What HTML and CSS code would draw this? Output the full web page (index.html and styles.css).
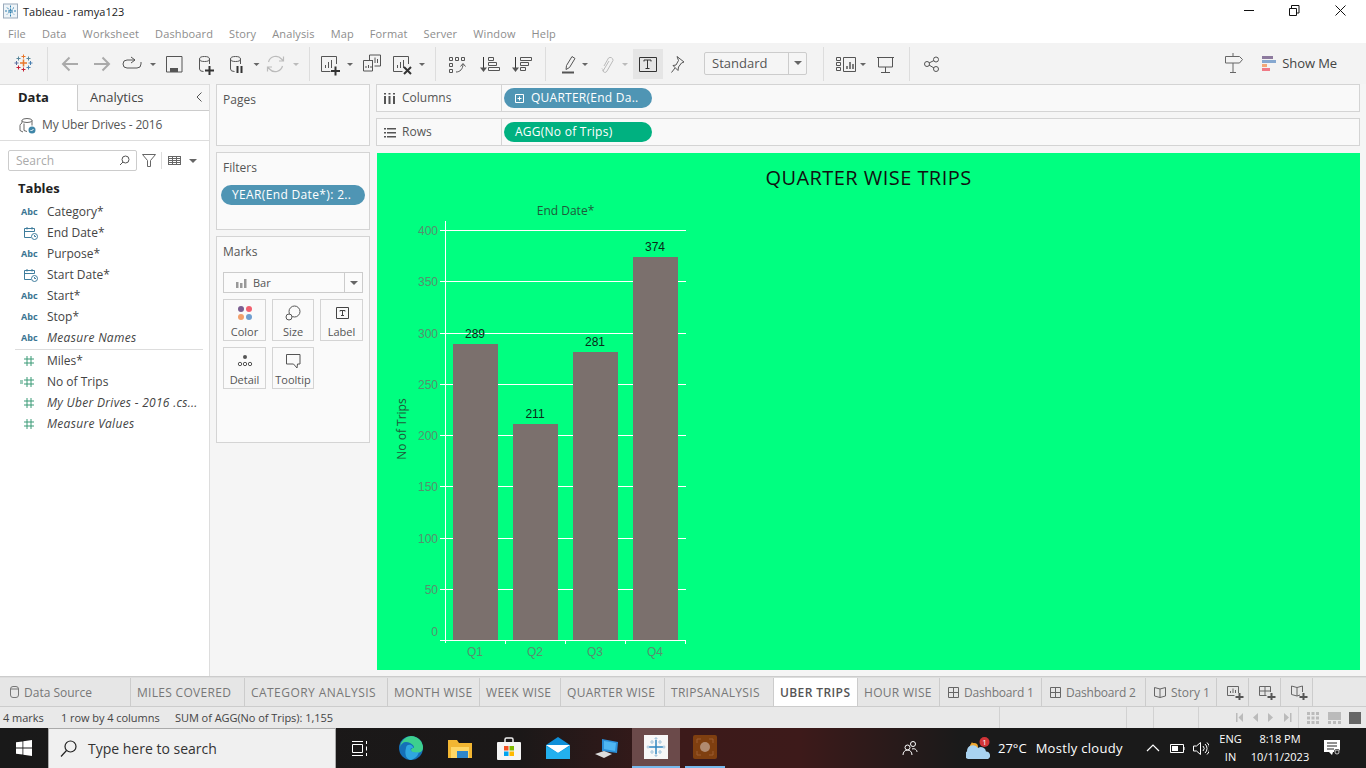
FILE: index.html
```html
<!DOCTYPE html>
<html lang="en">
<head>
  <meta charset="UTF-8">
  <title>Tableau - ramya123</title>
  <link rel="stylesheet" href="styles.css">
</head>
<body>
  <div class="titlebar">
    <svg class="app-icon" width="15" height="16" viewBox="0 0 15 16">
      <rect x="0.5" y="1" width="14" height="14" fill="#eef4f8" stroke="#9ab"/>
      <path d="M7.5 2.5v11M2 8h11M4 4.500l7 7M11 4.500l-7 7" stroke="#2f7fae" stroke-width="1" stroke-dasharray="2 1"/>
    </svg>
    <span class="title-text">Tableau - ramya123</span>
    <div class="win-btns">
      <svg width="122" height="22" viewBox="1245 0 122 22" fill="none" stroke="#111">
        <path d="M1245 10.500h10"/>
        <path d="M1290.500 8.500h7v7h-7zM1292.500 8v-2.500h7.500v7.500h-2.500"/>
        <path d="M1336.500 5.500l10 10M1346.500 5.500l-10 10"/>
      </svg>
    </div>
  </div>

  <div class="menubar">
    <span>File</span><span>Data</span><span>Worksheet</span><span>Dashboard</span><span>Story</span><span>Analysis</span><span>Map</span><span>Format</span><span>Server</span><span>Window</span><span>Help</span>
  </div>

  <div class="toolbar">
    <svg class="strip" width="704" height="41" viewBox="0 43 704 41" fill="none" stroke="#555">
      <!-- logo -->
      <path d="M20 63h7M23.500 59.500v7" stroke="#e8762b" stroke-width="1.500"/>
      <path d="M21.500 56.500h4M23.500 54.500v4" stroke="#e8762b"/>
      <path d="M14.500 63h4M16.500 61v4" stroke="#5b6f9e"/>
      <path d="M28.500 63h4M30.500 61v4M26.500 67.500h4M28.500 65.500v4" stroke="#4a7fb0"/>
      <path d="M21.500 69.500h4M23.500 67.500v4M16.500 67.500h4M18.500 65.500v4" stroke="#c72035"/>
      <path d="M16.500 58.500h4M18.500 56.500v4M26.500 58.500h4M28.500 56.500v4" stroke="#59879b"/>
      <path d="M47.500 47v34M309.500 47v34M435.500 47v34M545.500 47v34" stroke="#ddd"/>
      <!-- back, forward, cycle -->
      <path d="M78 64H63M69.500 57.500L63 64l6.500 6.500" stroke="#aaa" stroke-width="2"/>
      <path d="M94 64h15M102.500 57.500L109 64l-6.500 6.500" stroke="#aaa" stroke-width="2"/>
      <path d="M135 60h-8a4 4 0 0 0 0 8h10a4 4 0 0 0 4-4v-2M131 57l4 3-4 3"/>
      <path class="caret" d="M150 63h6l-3 3z"/>
      <!-- save -->
      <path d="M166.500 56.500h15.500v15.500h-15.500z"/>
      <path class="solid" d="M170 72v-4h8v4z"/>
      <!-- data sources -->
      <path d="M199.500 59v10q0 2.500 4 2.500M209.500 59v5"/>
      <ellipse cx="204.500" cy="59" rx="5" ry="2.500"/>
      <path d="M205 70.500h9M209.500 66v9" stroke="#333" stroke-width="2"/>
      <path d="M230.500 59v10q0 2.500 4 2.500M240.500 59v5"/>
      <ellipse cx="235.500" cy="59" rx="5" ry="2.500"/>
      <path d="M237.500 66v7M241.500 66v7" stroke="#333" stroke-width="2"/>
      <path class="caret" d="M253.500 63h6l-3 3z"/>
      <!-- refresh -->
      <path d="M268.500 62a7.500 7.500 0 0 1 13-3l2 2M282.500 66a7.500 7.500 0 0 1-13 3l-2-2M283.500 56.500v4.500h-4.500M267.500 71.500v-4.500h4.500" stroke="#bbb" stroke-width="1.200"/>
      <path class="caret-off" d="M293 63h6l-3 3z"/>
      <!-- worksheet tools -->
      <path d="M336.500 64v-7.500h-15v15h9M325.500 68v-3M328.500 68v-6M331.500 68v-8"/>
      <path d="M331 71h9M335.500 66.500v9" stroke="#333" stroke-width="2"/>
      <path class="caret" d="M347 63h6l-3 3z"/>
      <path d="M369.500 60v-5h11v11h-6M372.500 63v-3M375 63v-5.500M377.500 63v-4"/>
      <path d="M363.500 60.500h9v10.500h-9zM366 68v-2M368.500 68v-3M371 68v-2"/>
      <path d="M408.500 64v-7.500h-15v15h9M397.500 68v-3M400.500 68v-6M403.500 68v-8"/>
      <path d="M404 67l7 7M411 67l-7 7" stroke="#333" stroke-width="2"/>
      <path class="caret" d="M419 63h6l-3 3z"/>
      <!-- swap, sort -->
      <path d="M449.500 57.500h3v3h-3zM455.500 57.500h3v3h-3zM461.500 57.500h3v3h-3zM449.500 63.500h3v3h-3zM449.500 69.500h3v3h-3z"/>
      <path d="M456 72c4 0 7-3 7-8M460.500 66.500l2.500-3 2.500 3"/>
      <path d="M483.500 57v14" stroke="#333"/>
      <path class="solid" d="M480 67.500h7l-3.500 4.500z"/>
      <path d="M488.500 57.500h5v3h-5zM488.500 62.500h8v3h-8zM488.500 67.500h11v3h-11z"/>
      <path d="M515.500 57v14" stroke="#333"/>
      <path class="solid" d="M512 67.500h7l-3.500 4.500z"/>
      <path d="M520.500 57.500h11v3h-11zM520.500 62.500h8v3h-8zM520.500 67.500h5v3h-5z"/>
      <!-- highlight, annotate -->
      <path d="M562 72.500h12" stroke-width="2"/>
      <path d="M566 69.500l.5-4 5.500-9 3 2-5.500 9z"/>
      <path class="caret" d="M582 63h6l-3 3z"/>
      <path d="M604 66l4.500-8a2.800 2.800 0 0 1 4.500 2.500l-6 10.500a2 2 0 0 1-4-1.500l-1-1M603 71l6-10" stroke="#bbb"/>
      <path class="caret-off" d="M622 63h6l-3 3z"/>
      <rect class="active-tool" x="633" y="49" width="30" height="30"/>
      <path d="M639.500 57.500h17v14h-17z" stroke="#333"/>
      <path d="M644 61.500v-1.500h7v1.500M647.500 60v8M645.500 68.500h4" stroke="#333"/>
      <path d="M677 56.500l7 5.500-2.500 1-3 4-.5 3.500-5-5 3-.5 2.500-4.500zM675 68l-3.500 4.500"/>
    </svg>

    <div class="fit-select"><span>Standard</span><i class="sel-arrow"></i></div>

    <svg class="strip" width="143" height="41" viewBox="807 43 143 41" fill="none" stroke="#555">
      <path d="M823.500 47v34M909.500 47v34" stroke="#ddd"/>
      <path d="M836.500 57.500h4v3h-4zM836.500 62.500h4v3h-4zM836.500 67.500h4v3h-4zM843.500 57.500h12v14h-12z"/>
      <path d="M847 69v-3M850 69v-7M853 69v-5" stroke-width="1.500"/>
      <path class="caret" d="M860 63h6l-3 3z"/>
      <path d="M877 57.500h17M878.500 57.500v9.500h14v-9.500M885.500 67v5.500M881 72.500h9"/>
      <circle cx="936" cy="59.500" r="2.500"/>
      <circle cx="936" cy="69" r="2.500"/>
      <circle cx="927" cy="64" r="2.500"/>
      <path d="M929 63l5-2.500M929 65l5 3"/>
    </svg>

    <div class="show-me">
      <svg width="18" height="24" viewBox="1226 52 18 24" fill="none" stroke="#666">
        <path d="M1226.500 56.500h14l3 3-3 3.500h-14zM1234 56v-3M1234 63v9M1231 72.500h6"/>
      </svg>
      <svg class="bars-icon" width="14" height="16" viewBox="0 0 14 16">
        <rect width="11" height="3" fill="#8d7a9e"/>
        <rect y="4" width="14" height="3" fill="#86a8d0"/>
        <rect y="8" width="5" height="3" fill="#f2a878"/>
        <rect y="12" width="8" height="3" fill="#f07a86"/>
      </svg>
      <span>Show Me</span>
    </div>
  </div>

  <div class="workspace">
    <div class="data-pane">
      <div class="pane-tabs">
        <div class="pane-tab selected">Data</div>
        <div class="pane-tab">Analytics
          <svg class="collapse" width="8" height="10" viewBox="0 0 8 10" fill="none" stroke="#555"><path d="M6.500 0.500L2 5l4.500 4.500"/></svg>
        </div>
      </div>
      <div class="source">
        <svg width="17" height="17" viewBox="0 0 17 17" fill="none" stroke="#666">
          <ellipse cx="8" cy="3.500" rx="5" ry="2"/>
          <path d="M3 3.500v2.500q-2 1-2 2.500v5l3 1.500M13 3.500v5M5 6.500v7l3 1"/>
          <circle cx="13" cy="13" r="3.500" fill="#3f86a8" stroke="none"/>
          <path d="M11.500 13l1 1 2-2" stroke="#fff"/>
        </svg>
        <span>My Uber Drives - 2016</span>
      </div>
      <div class="search-row">
        <div class="search-box">
          <span>Search</span>
          <svg width="11" height="11" viewBox="0 0 11 11" fill="none" stroke="#555"><circle cx="6.500" cy="4.500" r="3.500"/><path d="M4 7L1 10"/></svg>
        </div>
        <svg class="funnel" width="14" height="13" viewBox="0 0 14 13" fill="none" stroke="#666"><path d="M0.500 0.500h13L8.500 6.500v6h-3v-6z"/></svg>
        <i class="search-sep"></i>
        <svg width="13" height="9" viewBox="0 0 13 9" fill="none" stroke="#666"><path d="M0 .5h13M0 2.500h13M0 4.500h13M0 6.500h13M0 8.500h13M.5 0v9M4.500 0v9M8.500 0v9M12.500 0v9"/></svg>
        <i class="small-caret"></i>
      </div>
      <div class="tables-head">Tables</div>
      <ul class="fields">
        <li><b class="abc">Abc</b>Category*</li>
        <li><svg class="date-ic" width="14" height="14" viewBox="0 0 14 14" fill="none" stroke="#3f7d9c"><path d="M7 11.500H0.500v-9h10v3M0.500 5.500h10M3 1v2.500M8 1v2.500"/><circle cx="10.500" cy="10.500" r="3"/><path d="M10.500 9v1.500h1.500"/></svg>End Date*</li>
        <li><b class="abc">Abc</b>Purpose*</li>
        <li><svg class="date-ic" width="14" height="14" viewBox="0 0 14 14" fill="none" stroke="#3f7d9c"><path d="M7 11.500H0.500v-9h10v3M0.500 5.500h10M3 1v2.500M8 1v2.500"/><circle cx="10.500" cy="10.500" r="3"/><path d="M10.500 9v1.500h1.500"/></svg>Start Date*</li>
        <li><b class="abc">Abc</b>Start*</li>
        <li><b class="abc">Abc</b>Stop*</li>
        <li class="calc"><b class="abc">Abc</b>Measure Names</li>
        <li class="divider"></li>
        <li><svg class="hash" width="10" height="10" viewBox="0 0 10 10" stroke="#3a9a76" fill="none"><path d="M0 3h10M0 7h10M3 0v10M7 0v10"/></svg>Miles*</li>
        <li><svg class="hash calc-hash" width="14" height="10" viewBox="0 0 14 10" stroke="#3a9a76" fill="none"><path d="M0 4h3M0 6h3M4 3h10M4 7h10M7 0v10M11 0v10"/></svg>No of Trips</li>
        <li class="calc"><svg class="hash" width="10" height="10" viewBox="0 0 10 10" stroke="#3a9a76" fill="none"><path d="M0 3h10M0 7h10M3 0v10M7 0v10"/></svg>My Uber Drives - 2016 .cs...</li>
        <li class="calc"><svg class="hash" width="10" height="10" viewBox="0 0 10 10" stroke="#3a9a76" fill="none"><path d="M0 3h10M0 7h10M3 0v10M7 0v10"/></svg>Measure Values</li>
      </ul>
    </div>

    <div class="cards">
      <div class="card pages-card"><div class="card-title">Pages</div></div>
      <div class="card filters-card">
        <div class="card-title">Filters</div>
        <div class="pill pill-blue filter-pill">YEAR(End Date*): 2..</div>
      </div>
      <div class="card marks-card">
        <div class="card-title">Marks</div>
        <div class="mark-type">
          <svg width="11" height="10" viewBox="0 0 11 10" fill="#999"><rect y="4" width="2.500" height="6"/><rect x="4" y="5" width="2.500" height="5"/><rect x="8" y="1" width="2.500" height="9"/></svg>
          <span>Bar</span>
          <i class="sel-arrow"></i>
        </div>
        <div class="mark-grid">
          <div class="mark-btn">
            <svg width="16" height="16" viewBox="0 0 16 16"><circle cx="4" cy="4" r="3" fill="#7b5e91"/><circle cx="12" cy="4" r="3" fill="#f1606f"/><circle cx="4" cy="12" r="3" fill="#f2a06c"/><circle cx="12" cy="12" r="3" fill="#6f9fd0"/></svg>
            <span>Color</span>
          </div>
          <div class="mark-btn">
            <svg width="16" height="16" viewBox="0 0 16 16" fill="none" stroke="#555"><circle cx="9.500" cy="6.500" r="5.500"/><circle cx="4" cy="12" r="3" fill="#fafafa"/></svg>
            <span>Size</span>
          </div>
          <div class="mark-btn">
            <svg width="16" height="16" viewBox="0 0 16 16" fill="none" stroke="#444"><path d="M2.500 2.500h12v11h-12z"/><path d="M6 6.500V5.500h5v1M8.500 5.500v5M7 10.500h3"/></svg>
            <span>Label</span>
          </div>
          <div class="mark-btn">
            <svg width="16" height="16" viewBox="0 0 16 16" fill="none" stroke="#555"><circle cx="8" cy="4" r="2" fill="#555" stroke="none"/><circle cx="3" cy="11" r="1.700"/><circle cx="8" cy="11" r="1.700"/><circle cx="13" cy="11" r="1.700"/></svg>
            <span>Detail</span>
          </div>
          <div class="mark-btn">
            <svg width="16" height="16" viewBox="0 0 16 16" fill="none" stroke="#555"><path d="M1.500 1.500h13.500v9.500h-2.500l-.5 4-3.500-4h-7z"/></svg>
            <span>Tooltip</span>
          </div>
        </div>
      </div>
    </div>

    <div class="canvas">
      <div class="shelf">
        <div class="shelf-name">
          <svg width="12" height="11" viewBox="0 0 12 11" fill="#555"><rect y="3" width="2" height="8"/><rect x="4.500" y="3" width="2" height="8"/><rect x="9" y="3" width="2" height="8"/><rect width="2" height="1.500"/><rect x="4.500" width="2" height="1.500"/><rect x="9" width="2" height="1.500"/></svg>
          <span>Columns</span>
        </div>
        <div class="pill pill-blue shelf-pill">
          <svg width="9" height="9" viewBox="0 0 9 9" fill="none" stroke="#fff"><path d="M.5.500h8v8h-8zM2.500 4.500h4M4.500 2.500v4"/></svg>
          QUARTER(End Da..
        </div>
      </div>
      <div class="shelf">
        <div class="shelf-name">
          <svg width="12" height="11" viewBox="0 0 12 11" fill="#555"><rect x="3" y="1" width="9" height="1.500"/><rect x="3" y="5" width="9" height="1.500"/><rect x="3" y="9" width="9" height="1.500"/><rect y="1" width="2" height="1.500"/><rect y="5" width="2" height="1.500"/><rect y="9" width="2" height="1.500"/></svg>
          <span>Rows</span>
        </div>
        <div class="pill pill-green shelf-pill">AGG(No of Trips)</div>
      </div>

      <div class="view">
        <h1 class="view-title">QUARTER WISE TRIPS</h1>
        <svg class="chart" width="983" height="477" viewBox="377 193 983 477">
          <text class="axis-head" x="565.500" y="215" text-anchor="middle">End Date*</text>
          <g class="grid-lines">
            <path d="M445.500 221V643M440 230.500H686M440 281.500H686M440 333.500H686M440 384.500H686M440 435.500H686M440 486.500H686M440 538.500H686M440 589.500H686M440 640.500H686"/>
            <path d="M505.500 640V644M565.500 640V644M625.500 640V644M685.500 640V644"/>
          </g>
          <g class="bars">
            <rect x="453" y="344" width="45" height="296"/>
            <rect x="513" y="424" width="45" height="216"/>
            <rect x="573" y="352" width="45" height="288"/>
            <rect x="633" y="257" width="45" height="383"/>
          </g>
          <g class="tick-labels" text-anchor="end">
            <text x="438" y="235">400</text>
            <text x="438" y="286">350</text>
            <text x="438" y="338">300</text>
            <text x="438" y="389">250</text>
            <text x="438" y="440">200</text>
            <text x="438" y="491">150</text>
            <text x="438" y="543">100</text>
            <text x="438" y="594">50</text>
            <text x="438" y="636">0</text>
          </g>
          <g class="tick-labels" text-anchor="middle">
            <text x="475" y="656">Q1</text>
            <text x="535" y="656">Q2</text>
            <text x="595" y="656">Q3</text>
            <text x="655" y="656">Q4</text>
          </g>
          <g class="value-labels" text-anchor="middle">
            <text x="475" y="338">289</text>
            <text x="535" y="418">211</text>
            <text x="595" y="346">281</text>
            <text x="655" y="251">374</text>
          </g>
          <text class="axis-head" transform="translate(406 429) rotate(-90)" text-anchor="middle">No of Trips</text>
        </svg>
      </div>
    </div>
  </div>

  <div class="sheet-tabs">
    <div class="sheet-tab">
      <svg width="9" height="12" viewBox="0 0 9 12" fill="none" stroke="#777"><rect x=".5" y=".5" width="8" height="11" rx="2.500"/><path d="M.5 3h8"/></svg>
      <span class="muted-gap">Data Source</span>
    </div>
    <div class="sheet-tab caps">MILES COVERED</div>
    <div class="sheet-tab caps wide">CATEGORY ANALYSIS</div>
    <div class="sheet-tab caps">MONTH WISE</div>
    <div class="sheet-tab caps">WEEK WISE</div>
    <div class="sheet-tab caps">QUARTER WISE</div>
    <div class="sheet-tab caps">TRIPSANALYSIS</div>
    <div class="sheet-tab caps current">UBER TRIPS</div>
    <div class="sheet-tab caps">HOUR WISE</div>
    <div class="sheet-tab">
      <svg class="dash-ic" width="11" height="11" viewBox="0 0 11 11" fill="none" stroke="#666"><path d="M.5.500h10v10H.5zM.5 5.500h10M5.500.5v10"/></svg>
      <span class="dash-name">Dashboard 1</span>
    </div>
    <div class="sheet-tab">
      <svg class="dash-ic" width="11" height="11" viewBox="0 0 11 11" fill="none" stroke="#666"><path d="M.5.500h10v10H.5zM.5 5.500h10M5.500.5v10"/></svg>
      <span class="dash-name">Dashboard 2</span>
    </div>
    <div class="sheet-tab">
      <svg class="dash-ic" width="12" height="11" viewBox="0 0 12 11" fill="none" stroke="#666"><path d="M6 2L.5.500v8.500L6 10.500l5.500-1.500V.5zM6 2v8.500"/></svg>
      <span>Story 1</span>
    </div>
    <div class="sheet-tab add-tab">
      <svg width="17" height="15" viewBox="0 0 17 15" fill="none" stroke="#666"><path d="M11.500 8V1.500H.5v9h7M3.500 8V6M6 8V3.500M8.500 8V5"/><path d="M8.500 12h8M12.500 8v7" stroke="#555" stroke-width="2"/></svg>
    </div>
    <div class="sheet-tab add-tab">
      <svg width="17" height="15" viewBox="0 0 17 15" fill="none" stroke="#666"><path d="M11.500 7V1.500H.5v9h7M.5 6h11M6 1.500v9"/><path d="M8.500 12h8M12.500 8v7" stroke="#555" stroke-width="2"/></svg>
    </div>
    <div class="sheet-tab add-tab">
      <svg width="17" height="15" viewBox="0 0 17 15" fill="none" stroke="#666"><path d="M6 2.500L.5 1v8.500L6 11l3-1M6 2.500L11.500 1v6M6 2.500V11"/><path d="M8.500 12h8M12.500 8v7" stroke="#555" stroke-width="2"/></svg>
    </div>
  </div>

  <div class="statusbar">
    <span class="st-marks">4 marks</span>
    <span class="st-size">1 row by 4 columns</span>
    <span>SUM of AGG(No of Trips): 1,155</span>
    <div class="st-right">
      <i class="st-cell c1"></i><i class="st-cell c2"></i><i class="st-cell c3"></i>
      <div class="st-cell st-nav">
        <svg width="56" height="9" viewBox="0 0 56 9" fill="#bbb"><path d="M0 0h1.500v9H0zM7 0v9L2.500 4.500zM22 0v9l-5-4.500zM32 0v9l5-4.500zM48 0v9l5-4.500zM54 0h1.500v9H54z"/></svg>
      </div>
      <div class="st-views">
        <svg width="54" height="12" viewBox="0 0 54 12">
          <g fill="#bbb"><path d="M0 0h3v3H0zM4.500 0h3v3h-3zM9 0h3v3H9zM0 4.500h3v3H0zM4.500 4.500h3v3h-3zM9 4.500h3v3H9zM0 9h3v3H0zM4.500 9h3v3h-3zM9 9h3v3H9z"/><path d="M21 0h13v8H21zM21 9h3v3h-3zM26 9h3v3h-3zM31 9h3v3h-3z"/></g>
          <rect x="42" width="12" height="12" fill="#666"/>
        </svg>
      </div>
    </div>
  </div>

  <div class="taskbar">
    <div class="start">
      <svg width="16" height="16" viewBox="0 0 16 16" fill="#fff"><path d="M0 2.300l6.500-.9v6.200H0zM7.300 1.300L16 0v7.600H7.300zM0 8.400h6.500v6.200L0 13.700zM7.300 8.400H16V16l-8.700-1.200z"/></svg>
    </div>
    <div class="task-search">
      <svg width="17" height="18" viewBox="0 0 17 18" fill="none" stroke="#222" stroke-width="1.200"><circle cx="10.500" cy="6.500" r="5.500"/><path d="M6.500 10.500L1 16.500"/></svg>
      <span>Type here to search</span>
    </div>
    <div class="task-view">
      <svg width="16" height="15" viewBox="0 0 16 15" fill="none" stroke="#fff"><path d="M.5 3.500h10v8H.5zM0 .5h11M0 14.500h11M14.500 0v3M14.500 5.500v4M14.500 12v3"/></svg>
    </div>
    <div class="task-app">
      <svg width="24" height="24" viewBox="0 0 24 24">
        <circle cx="12" cy="12" r="12" fill="#1570b8"/>
        <path d="M12 0a12 12 0 0 1 12 12c0 3-3 5-7 5-3 0-5-1-5-3 0-1 1-2 2-2 3 0-1-6-7-6-3 0-5 2-6 5A12 12 0 0 1 12 0z" fill="#3dcf8e"/>
        <path d="M7 12c0-3 3-4 5-3s3 3 1 3c-2 0-2 3 1 4 2 .6 4 .5 6 0a12 12 0 0 1-8 8C8 24 5 19 7 12z" fill="#2fa6e0"/>
      </svg>
    </div>
    <div class="task-app">
      <svg width="24" height="20" viewBox="0 0 24 20">
        <path d="M0 2h9l2 3h13v15H0z" fill="#f2b632"/>
        <rect x="3" y="9" width="18" height="11" fill="#ffd766"/>
        <rect x="9" y="13" width="11" height="7" fill="#2f86c9"/>
      </svg>
    </div>
    <div class="task-app">
      <svg width="24" height="24" viewBox="0 0 24 24">
        <path d="M8 7V3.500A1.500 1.500 0 0 1 9.500 2h5A1.500 1.500 0 0 1 16 3.500V7" fill="none" stroke="#eee" stroke-width="1.500"/>
        <rect y="6" width="24" height="18" rx="1" fill="#f5f5f5"/>
        <rect x="7" y="10" width="4.500" height="4.500" fill="#f25022"/>
        <rect x="12.500" y="10" width="4.500" height="4.500" fill="#7fba00"/>
        <rect x="7" y="15.500" width="4.500" height="4.500" fill="#00a4ef"/>
        <rect x="12.500" y="15.500" width="4.500" height="4.500" fill="#ffb900"/>
      </svg>
    </div>
    <div class="task-app">
      <svg width="24" height="22" viewBox="0 0 24 22">
        <path d="M0 8L12 0l12 8v14H0z" fill="#0f8fd8"/>
        <path d="M0 8h24l-12 8z" fill="#fff"/>
        <path d="M0 9l12 7 12-7v13H0z" fill="#23b0ee"/>
      </svg>
    </div>
    <div class="task-app">
      <svg width="24" height="22" viewBox="0 0 24 22">
        <path d="M7 2l16 3-1 11-15-2z" fill="#2b8fd8"/>
        <path d="M9 4l12 2-1 8-11-2z" fill="#4fb6f2"/>
        <path d="M0 17l9-3 8 3-8 4z" fill="#ddd"/>
      </svg>
    </div>
    <div class="task-app running">
      <svg width="24" height="24" viewBox="0 0 24 24">
        <rect width="24" height="24" fill="#f7f7f7"/>
        <path d="M12 5v14M5 12h14" stroke="#2f86c1" stroke-width="1.500"/>
        <path d="M6 7h4M8 5v4M14 7h4M16 5v4M6 17h4M8 15v4M14 17h4M16 15v4M2.500 12h3M4 10.500v3M18.500 12h3M20 10.500v3M10.500 3.500h3M12 2v3M10.500 20.500h3M12 19v3" stroke="#a9c8de" stroke-width="1.200"/>
      </svg>
    </div>
    <div class="task-app running-2">
      <svg width="24" height="24" viewBox="0 0 24 24">
        <rect width="24" height="24" rx="2" fill="#7f3f10"/>
        <circle cx="12" cy="12" r="5" fill="#b08a70"/>
        <path d="M4 8V4h4M16 4h4v4M20 16v4h-4M8 20H4v-4" fill="none" stroke="#9c5c30"/>
      </svg>
    </div>

    <div class="tray">
      <svg class="people" width="16" height="16" viewBox="0 0 16 16" fill="none" stroke="#fff"><circle cx="11" cy="4" r="2.500"/><circle cx="5.500" cy="7.500" r="2.500"/><path d="M1 15c0-3 2-5 4.500-5S10 12 10 15M10 9c3-1 5 1 5 3"/></svg>
      <div class="weather">
        <svg width="24" height="24" viewBox="0 0 24 24">
          <path d="M3 12l3-6 3 5z" fill="#f0a830"/>
          <circle cx="8" cy="11" r="4" fill="#f0a830"/>
          <path d="M2 23a4 4 0 0 1-1-7.500A6 6 0 0 1 12 12a5 5 0 0 1 8 3.500 4 4 0 0 1 2 7.500z" fill="#a9d3f0"/>
          <circle cx="18.500" cy="6" r="5" fill="#d13438"/>
          <text class="badge-num" x="18.500" y="9" text-anchor="middle">1</text>
        </svg>
        <span class="temp">27°C</span>
        <span class="sky">Mostly cloudy</span>
      </div>
      <svg class="tray-icons" width="63" height="16" viewBox="1146 740 63 16" fill="none" stroke="#fff">
        <path d="M1147 751l6-6 6 6" stroke-width="1.200"/>
        <path d="M1170.500 744.500h13v8h-13zM1184 747v3"/>
        <rect x="1172" y="746" width="6" height="5" fill="#fff" stroke="none"/>
        <path d="M1193.500 746h3l4-3.500v12l-4-3.500h-3zM1203 746a3.500 3.500 0 0 1 0 5M1205 744a6 6 0 0 1 0 9M1207 742.500a8 8 0 0 1 0 12"/>
      </svg>
      <div class="lang"><span>ENG</span><span>IN</span></div>
      <div class="clock"><span>8:18 PM</span><span>10/11/2023</span></div>
      <svg class="notify" width="17" height="16" viewBox="0 0 17 16">
        <path d="M0 0h16v12H9l-1 3-3-3H0z" fill="#fff"/>
        <path d="M3 3h10M3 6h10M3 9h7" stroke="#222"/>
        <circle cx="13" cy="12" r="3" fill="#222"/>
        <circle cx="13" cy="12" r="2" fill="none" stroke="#fff" stroke-width=".7"/>
      </svg>
    </div>
  </div>
</body>
</html>
```

FILE: styles.css
```css
* {
  box-sizing: border-box;
}
html, body {
  margin: 0;
  padding: 0;
}
body {
  width: 1366px;
  height: 768px;
  overflow: hidden;
  display: flex;
  flex-direction: column;
  font-family: "Open Sans", "Noto Sans", sans-serif;
  font-size: 12px;
  color: #444;
  background: #fff;
}
i {
  display: block;
}
svg {
  display: block;
  flex: none;
}

/* window chrome */
.titlebar {
  height: 22px;
  display: flex;
  align-items: center;
  padding-left: 3px;
  background: #fff;
}
.title-text {
  margin-left: 5px;
  font-size: 11px;
  color: #222;
}
.win-btns {
  margin-left: auto;
}
.menubar {
  height: 21px;
  display: flex;
  gap: 16px;
  align-items: center;
  padding: 2px 0 0 8px;
  font-size: 11px;
  letter-spacing: .13px;
  color: #8d8d8d;
  background: #fff;
}

/* toolbar */
.toolbar {
  height: 41px;
  display: flex;
  align-items: center;
  background: #f3f3f3;
}
.strip .caret {
  fill: #666;
  stroke: none;
}
.strip .caret-off {
  fill: #bbb;
  stroke: none;
}
.strip .solid {
  fill: #555;
  stroke: none;
}
.strip .active-tool {
  fill: #e5e5e5;
  stroke: none;
}
.fit-select {
  width: 103px;
  height: 23px;
  display: flex;
  align-items: center;
  padding-left: 7px;
  font-size: 13px;
  color: #555;
  background: #f5f5f5;
  border: 1px solid #ccc;
  border-radius: 2px;
}
.fit-select span {
  margin-bottom: 2px;
}
.sel-arrow {
  width: 18px;
  height: 100%;
  margin-left: auto;
  border-left: 1px solid #ccc;
  position: relative;
}
.sel-arrow::after {
  content: "";
  position: absolute;
  left: 5px;
  top: 8px;
  border-style: solid;
  border-width: 4px 4px 0;
  border-color: #666 transparent transparent;
}
.show-me {
  margin-left: auto;
  padding-right: 29px;
  display: flex;
  align-items: center;
  font-size: 13px;
  color: #444;
}
.show-me span {
  margin-bottom: 2px;
  letter-spacing: -.1px;
}
.bars-icon {
  margin-left: 19px;
  margin-right: 6px;
}

/* main area */
.workspace {
  height: 593px;
  display: flex;
  background: #f5f5f5;
  border-bottom: 1px solid #ccc;
}
.data-pane {
  width: 210px;
  background: #fff;
  border-right: 1px solid #ddd;
  border-top: 1px solid #ddd;
}
.pane-tabs {
  height: 26px;
  display: flex;
}
.pane-tab {
  flex: 1;
  display: flex;
  align-items: center;
  padding: 0 0 2px 12px;
  font-size: 13px;
  color: #444;
  background: #f7f7f7;
  border-left: 1px solid #ccc;
  border-bottom: 1px solid #ccc;
}
.pane-tab.selected {
  flex: 0 0 77px;
  padding-left: 18px;
  font-weight: 700;
  color: #222;
  background: #fff;
  border: 0;
}
.collapse {
  margin-left: auto;
  margin-right: 6px;
}
.source {
  height: 30px;
  display: flex;
  align-items: center;
  gap: 6px;
  padding-left: 19px;
  color: #555;
  border-bottom: 1px solid #ddd;
}
.source span {
  margin-bottom: 2px;
  letter-spacing: -.15px;
}
.search-row {
  display: flex;
  align-items: center;
  height: 21px;
  margin: 9px 0 0 8px;
}
.search-box {
  width: 129px;
  height: 21px;
  display: flex;
  align-items: center;
  justify-content: space-between;
  padding: 0 6px 0 7px;
  color: #aaa;
  border: 1px solid #ccc;
  border-radius: 2px;
}
.funnel {
  margin-left: 5px;
}
.search-sep {
  width: 1px;
  height: 17px;
  margin: 0 6px 0 5px;
  background: #ddd;
}
.small-caret {
  margin-left: 8px;
  border-style: solid;
  border-width: 4px 4px 0;
  border-color: #666 transparent transparent;
}
.tables-head {
  margin: 8px 0 4px 18px;
  font-size: 13px;
  font-weight: 700;
  line-height: 18px;
  color: #222;
}
.fields {
  list-style: none;
  margin: 0;
  padding: 0;
}
.fields li {
  height: 21px;
  display: flex;
  align-items: center;
  position: relative;
  padding-left: 47px;
}
.fields li.calc {
  font-style: italic;
  letter-spacing: .3px;
}
.fields li.divider {
  height: 1px;
  margin: 1px 6px 0 15px;
  padding: 0;
  background: #ddd;
}
.abc {
  position: absolute;
  left: 21px;
  font-size: 9px;
  font-weight: 700;
  font-style: normal;
  letter-spacing: 0;
  color: #3a7592;
}
.date-ic {
  position: absolute;
  left: 24px;
  top: 4px;
}
.hash {
  position: absolute;
  left: 24px;
  top: 6px;
}
.calc-hash {
  left: 20px;
}

/* pages, filters and marks */
.cards {
  width: 166px;
  padding: 0 6px;
  display: flex;
  flex-direction: column;
  gap: 6px;
}
.card {
  background: #fafafa;
  border: 1px solid #d4d4d4;
  padding: 6px;
}
.card-title {
  line-height: 18px;
  color: #555;
}
.pages-card {
  height: 62px;
}
.filters-card {
  height: 78px;
  padding: 6px 4px;
}
.filters-card .card-title {
  padding-left: 2px;
}
.marks-card {
  height: 207px;
}
.pill {
  height: 20px;
  display: flex;
  align-items: center;
  padding-bottom: 2px;
  border-radius: 10px;
  color: #fff;
  white-space: nowrap;
  letter-spacing: .25px;
}
.pill-blue {
  background: #4f95b4;
}
.pill-green {
  background: #00b180;
}
.filter-pill {
  margin-top: 8px;
  width: 144px;
  padding-left: 11px;
  letter-spacing: .35px;
}
.mark-type {
  height: 21px;
  margin-top: 11px;
  display: flex;
  align-items: center;
  gap: 6px;
  padding-left: 12px;
  font-size: 11px;
  color: #555;
  border: 1px solid #ccc;
  background: #fbfbfb;
}
.mark-grid {
  margin-top: 6px;
  display: grid;
  grid-template-columns: 43px 42px 43px;
  grid-auto-rows: 42px;
  gap: 6px;
}
.mark-btn {
  display: flex;
  flex-direction: column;
  align-items: center;
  justify-content: flex-end;
  gap: 3px;
  padding-bottom: 1px;
  font-size: 11px;
  color: #555;
  border: 1px solid #d4d4d4;
}

/* shelves and view */
.canvas {
  width: 984px;
}
.shelf {
  height: 28px;
  margin-bottom: 6px;
  display: flex;
  align-items: center;
  background: #f9f9f9;
  border: 1px solid #d4d4d4;
}
.shelf-name {
  width: 125px;
  height: 100%;
  display: flex;
  align-items: center;
  gap: 6px;
  padding-left: 7px;
  color: #555;
  border-right: 1px solid #d4d4d4;
}
.shelf-name span {
  margin-bottom: 2px;
}
.shelf-pill {
  width: 148px;
  margin-left: 2px;
  padding-left: 11px;
  gap: 7px;
}
.shelf-pill svg {
  margin-top: 2px;
}
.view {
  height: 517px;
  margin: 7px 0 0 1px;
  background: #00ff80;
  overflow: hidden;
}
.view-title {
  height: 40px;
  margin: 0;
  padding-top: 11px;
  text-align: center;
  font-size: 20px;
  font-weight: 500;
  letter-spacing: .45px;
  line-height: 27px;
  color: #111;
}
.chart text {
  font-family: "Liberation Sans", Arial, sans-serif;
  font-size: 12px;
}
.chart .axis-head {
  font-family: "Open Sans", sans-serif;
  font-size: 12px;
  fill: #1f5a3a;
}
.grid-lines {
  fill: none;
  stroke: #fff;
}
.bars {
  fill: #7b706d;
}
.tick-labels {
  fill: #56906e;
}
.value-labels {
  fill: #0a2a18;
}

/* sheet tabs */
.sheet-tabs {
  height: 30px;
  display: grid;
  grid-template-columns: 131px 114px 143px 92px 81px 104px 109px 84px 82px 102px 104px 71px 32px 32px 32px;
  background: #e8e8e8;
  border-bottom: 1px solid #ccc;
  border-top: 1px solid #ddd;
}
.sheet-tab {
  display: flex;
  align-items: center;
  gap: 5px;
  padding-left: 6px;
  color: #777;
  white-space: nowrap;
  background: #e6e6e6;
  border-right: 1px solid #ccc;
}
.sheet-tab.caps {
  letter-spacing: .3px;
}
.sheet-tab.wide {
  letter-spacing: .45px;
}
.sheet-tab:first-child {
  padding-left: 10px;
}
.sheet-tab.current {
  font-weight: 600;
  letter-spacing: .4px;
  color: #555;
  background: #fff;
  border-left: 1px solid #ccc;
  margin-left: -1px;
}
.dash-name {
  letter-spacing: -.2px;
}
.add-tab {
  padding-left: 10px;
}
.dash-ic {
  margin-left: 2px;
}

/* status bar */
.statusbar {
  height: 21px;
  display: flex;
  align-items: center;
  padding-left: 3px;
  font-size: 11px;
  letter-spacing: -.05px;
  color: #444;
  background: #e9e9e9;
}
.st-marks {
  width: 58px;
}
.st-size {
  width: 114px;
}
.st-right {
  margin-left: auto;
  height: 100%;
  display: flex;
}
.st-cell {
  height: 100%;
  border-left: 1px solid #d2d2d2;
}
.c1 {
  width: 127px;
}
.c2 {
  width: 27px;
}
.c3 {
  width: 45px;
}
.st-nav {
  width: 100px;
  display: flex;
  align-items: center;
  padding-left: 37px;
}
.st-views {
  width: 68px;
  display: flex;
  align-items: center;
  padding-left: 8px;
  border-left: 1px solid #d2d2d2;
}

/* windows taskbar */
.taskbar {
  flex: 1;
  display: flex;
  align-items: center;
  color: #fff;
  background: linear-gradient(90deg, #191919 0, #1b1818 520px, #3c1a1a 680px, #3d1a1a 800px, #1a1a1a 960px);
}
.start {
  width: 48px;
  display: flex;
  justify-content: center;
}
.task-search {
  width: 288px;
  height: 40px;
  display: flex;
  align-items: center;
  gap: 11px;
  padding-left: 11px;
  font-size: 14px;
  color: #333;
  background: #f0f0f0;
  border: 1px solid #aaa;
  border-bottom: 0;
}
.task-view {
  width: 50px;
  display: flex;
  justify-content: center;
  padding-right: 2px;
}
.task-app {
  width: 49px;
  height: 40px;
  display: flex;
  align-items: center;
  justify-content: center;
}
.task-app.running {
  width: 48px;
  margin-left: 1px;
  background: #6b4a4a;
  border-bottom: 2px solid #76b9ed;
}
.task-app.running-2 {
  width: 40px;
  margin-left: 5px;
  border-bottom: 2px solid #76b9ed;
}
.tray {
  margin-left: auto;
  height: 100%;
  display: flex;
  align-items: center;
  font-size: 13px;
}
.people {
  margin-right: 48px;
}
.weather {
  display: flex;
  align-items: center;
  width: 180px;
}
.temp {
  margin: 0 9px 0 8px;
}
.sky {
  letter-spacing: .3px;
}
.badge-num {
  font-family: "Open Sans", sans-serif;
  font-size: 8px;
  fill: #fff;
}
.lang, .clock {
  display: flex;
  flex-direction: column;
  align-items: center;
  font-size: 11px;
  line-height: 18px;
}
.tray-icons {
  margin-right: 9px;
}
.lang {
  width: 25px;
}
.clock {
  width: 58px;
  margin-left: 8px;
}
.notify {
  margin: 0 25px 0 15px;
}
```
